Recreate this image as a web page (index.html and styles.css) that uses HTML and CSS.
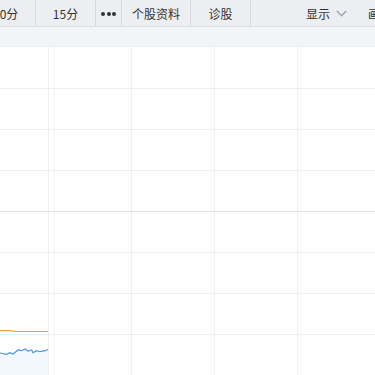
FILE: index.html
```html
<!DOCTYPE html>
<html lang="zh">
<head>
<meta charset="utf-8">
<link rel="stylesheet" href="styles.css">
</head>
<body>
<div class="page">
  <div class="toolbar">
    <div class="tab tab-first"><span>30分</span></div>
    <div class="tab tab-15">15分</div>
    <div class="tab tab-more"><i class="dot"></i><i class="dot"></i><i class="dot"></i></div>
    <div class="tab tab-info">个股资料</div>
    <div class="tab tab-diag">诊股</div>
    <div class="spacer"></div>
    <div class="show">显示
      <svg class="chev" width="11" height="7" viewBox="0 0 11 7"><polyline points="0.8,1 5.5,5.8 10.2,1" fill="none" stroke="#9aa8b8" stroke-width="1.4"/></svg>
    </div>
    <div class="draw">画</div>
  </div>
  <div class="band"></div>
  <div class="chart">
    <svg width="375" height="328" viewBox="0 0 375 328">
      <g stroke="#f6f6f6" stroke-width="1">
        <line x1="54" y1="0" x2="54" y2="328"/>
        <line x1="211" y1="0" x2="211" y2="328"/>
        <line x1="301" y1="0" x2="301" y2="328"/>
      </g>
      <g stroke="#efefef" stroke-width="1">
        <line x1="48.5" y1="0" x2="48.5" y2="328"/>
        <line x1="131.5" y1="0" x2="131.5" y2="328"/>
        <line x1="214.5" y1="0" x2="214.5" y2="328"/>
        <line x1="297.5" y1="0" x2="297.5" y2="328"/>
        <line x1="0" y1="41.5" x2="375" y2="41.5"/>
        <line x1="0" y1="82.5" x2="375" y2="82.5"/>
        <line x1="0" y1="123.5" x2="375" y2="123.5"/>
        <line x1="0" y1="205.5" x2="375" y2="205.5"/>
        <line x1="0" y1="246.5" x2="375" y2="246.5"/>
        <line x1="0" y1="287.5" x2="375" y2="287.5"/>
      </g>
      <line x1="0" y1="164.5" x2="375" y2="164.5" stroke="#e2e2e2" stroke-width="1"/>
      <polygon fill="#f2f8fe" points="0,306 6.7,307.3 10,305.7 13,307 18,303 21.7,303.7 25,302 28,304 31.7,303 33,305.7 36.7,303.7 40,304.7 45,303.7 48,302.3 48,328 0,328"/>
      <polyline fill="none" stroke="#f0a33a" stroke-width="1.2" points="0,283.6 10,283.6 15,284.5 48,284.5"/>
      <polyline fill="none" stroke="#4c97e6" stroke-width="1.2" points="0,306 6.7,307.3 10,305.7 13,307 18,303 21.7,303.7 25,302 28,304 31.7,303 33,305.7 36.7,303.7 40,304.7 45,303.7 48,302.3"/>
    </svg>
  </div>
</div>
</body>
</html>
```

FILE: styles.css
```css
html, body {
  margin: 0;
  padding: 0;
  background: #ffffff;
}
.page {
  width: 375px;
  height: 375px;
  overflow: hidden;
  font-family: "Noto Sans CJK SC", "Noto Sans", sans-serif;
}
.toolbar {
  display: flex;
  height: 27px;
  background: #eceef1;
  border-bottom: 1px solid #dcdfe3;
  box-sizing: border-box;
  font-size: 12px;
  color: #333333;
  line-height: 27px;
  white-space: nowrap;
}
.tab {
  flex: none;
  text-align: center;
  border-right: 1px solid #d6d9dd;
  box-sizing: border-box;
  overflow: hidden;
}
.tab-first {
  width: 36px;
  text-align: left;
}
.tab-first span {
  display: inline-block;
  margin-left: -7px;
}
.tab-15 { width: 60px; }
.tab-more {
  width: 26px;
  display: flex;
  align-items: center;
  justify-content: center;
  gap: 1.5px;
  padding-top: 1px;
}
.dot {
  width: 4px;
  height: 4px;
  border-radius: 50%;
  background: #333333;
}
.tab-info { width: 69px; }
.tab-diag { width: 60px; }
.spacer { flex: 1; }
.show {
  flex: none;
  display: flex;
  align-items: center;
  gap: 6px;
  padding-right: 21px;
}
.chev { display: block; margin-top: 1px; }
.draw {
  flex: none;
  width: 7px;
  overflow: hidden;
}
.band {
  height: 19px;
  background: #f2f4f7;
  border-bottom: 1px solid #eceef0;
}
.chart svg { display: block; }
```
